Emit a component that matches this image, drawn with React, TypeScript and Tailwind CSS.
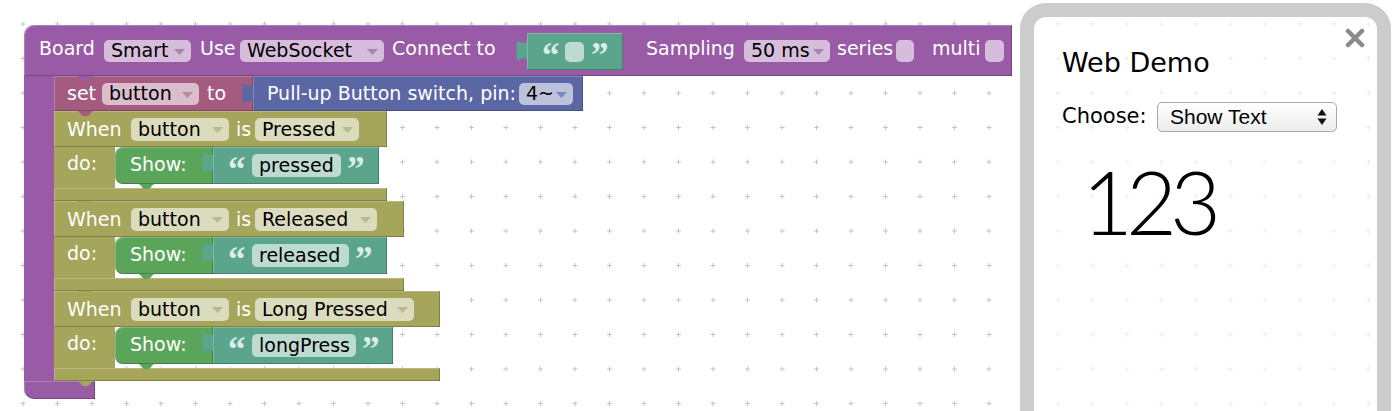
import React from "react";

// Blockly-like colours
// purple #995ba5, maroon #a55b80, blue #5b67a5, olive #a5a55b, green #5ba55b, teal #5ba58c

function Arrow({ fill }: { fill: string }) {
  return (
    <svg width="11" height="6" viewBox="0 0 11 6" className="shrink-0 mt-[2px]">
      <path d="M0 0H11L5.5 6Z" fill={fill} />
    </svg>
  );
}

function Field({
  w,
  bg,
  text,
  arrow,
  h = "h-[23px]",
}: {
  w: string;
  bg: string;
  text?: string;
  arrow?: string;
  h?: string;
}) {
  return (
    <div
      className={`${w} ${h} ${bg} shrink-0 rounded-[5px] flex items-center justify-between pl-[7px] pr-[6px] text-black whitespace-nowrap`}
    >
      <span>{text}</span>
      {arrow && <Arrow fill={arrow} />}
    </div>
  );
}

// bottom bump of a statement block
function Bump({ fill, left }: { fill: string; left: string }) {
  return (
    <svg
      width="17"
      height="5"
      viewBox="0 0 17 5"
      className={`absolute top-full ${left} z-10`}
    >
      <path d="M0 0C3 0 4 5 7 5H10C13 5 14 0 17 0Z" fill={fill} />
    </svg>
  );
}

// left puzzle tab of a value block
function Tab({ fill, top }: { fill: string; top: string }) {
  return (
    <svg
      width="11"
      height="21"
      viewBox="0 0 11 21"
      className={`absolute right-full ${top}`}
    >
      <path
        d="M11 2C9 4 6 3 3 1.5C1 0.5 0.5 2 0.5 5V16C0.5 19 1 20.5 3 19.5C6 18 9 17 11 19Z"
        fill={fill}
      />
    </svg>
  );
}

function Quote({ children }: { children: React.ReactNode }) {
  return (
    <span className="font-['Liberation_Serif',serif] font-bold text-[35px] leading-none text-[#dcede6] translate-y-[4px]">
      {children}
    </span>
  );
}

const edge =
  "shadow-[inset_0_-1px_0_rgba(0,0,0,0.22),inset_-1px_0_0_rgba(0,0,0,0.22),inset_1px_1px_0_rgba(255,255,255,0.22)]";

function ShowRow({ teal, field, text }: { teal: string; field: string; text: string }) {
  return (
    <div className="flex items-start">
      <div
        className={`relative w-[98px] h-[37px] bg-[#5ba55b] rounded-l-[8px] flex items-center pl-[15px] pb-[3px] ${edge}`}
      >
        Show:
        <Bump fill="#5ba55b" left="left-[23px]" />
      </div>
      <div className={`relative ${teal} h-[37px] bg-[#5ba58c] flex items-center pl-[15px] ${edge}`}>
        <Tab fill="#5ba58c" top="top-[5px]" />
        <span className="w-[24px] flex">
          <Quote>“</Quote>
        </span>
        <Field w={field} bg="bg-[#bddbd1]" text={text} />
        <span className="ml-[6px] flex">
          <Quote>”</Quote>
        </span>
      </div>
    </div>
  );
}

function WhenBlock({
  w,
  state,
  stateW,
  teal,
  field,
  text,
}: {
  w: string;
  state: string;
  stateW: string;
  teal: string;
  field: string;
  text: string;
}) {
  return (
    <div className={`${w} flex flex-col`}>
      <div className={`h-[36px] bg-[#a5a55b] flex items-center pl-[13px] whitespace-nowrap ${edge}`}>
        <span className="w-[64px]">When</span>
        <Field w="w-[98px]" bg="bg-[#dbdbbd]" text="button" arrow="#b9b98c" />
        <span className="w-[26px] pl-[7px]">is</span>
        <Field w={stateW} bg="bg-[#dbdbbd]" text={state} arrow="#b9b98c" />
      </div>
      <div className="h-[41px] flex items-start">
        <div className="w-[61px] self-stretch bg-[#a5a55b] pl-[13px] pt-[5px] leading-[22px]">do:</div>
        <ShowRow teal={teal} field={field} text={text} />
      </div>
      <div className={`relative h-[13px] bg-[#a5a55b] ${edge}`}>
        <Bump fill="#a5a55b" left="left-[23px]" />
      </div>
    </div>
  );
}

function Grid() {
  return (
    <svg className="absolute inset-0" width="1394" height="411">
      <defs>
        <pattern id="grid" x="5.75" y="6.75" width="34.5" height="34.5" patternUnits="userSpaceOnUse">
          <path d="M14.75 17.25h5M17.25 14.75v5" stroke="#c4c4c4" strokeWidth="1" />
        </pattern>
      </defs>
      <rect width="1394" height="411" fill="url(#grid)" />
    </svg>
  );
}

function Panel() {
  return (
    <div className="absolute left-[1020px] top-[3px] w-[371px] h-[480px] rounded-[26px] border-[14px] border-[#cccccc] bg-white/70 text-black">
      <div className="relative pl-[28px] pt-[30px]">
        <svg width="20" height="20" viewBox="0 0 20 20" className="absolute right-[12px] top-[11px]">
          <path d="M3 3L17 17M17 3L3 17" stroke="#8a8a8a" strokeWidth="4.5" strokeLinecap="round" />
        </svg>
        <div className="text-[27px] leading-[32px]">Web Demo</div>
        <div className="flex items-center mt-[23px] h-[30px]">
          <span className="w-[95px] text-[21px]">Choose:</span>
          <div className="w-[180px] h-[30px] rounded-[5px] border border-[#a8a8a8] bg-linear-to-b from-white to-[#ececec] flex items-center justify-between pl-[12px] pr-[9px] font-['Liberation_Sans',sans-serif] text-[21px]">
            <span>Show Text</span>
            <svg width="10" height="18" viewBox="0 0 10 18">
              <path d="M5 1L9.5 7.5H0.5Z M5 17L9.5 10.5H0.5Z" fill="#111" />
            </svg>
          </div>
        </div>
        <div className="pl-[20px] mt-[25px] font-['Lato',sans-serif] font-light text-[88px] leading-none tracking-[-7px]">
          123
        </div>
      </div>
    </div>
  );
}

export default function App() {
  return (
    <div className="relative w-[1394px] h-[411px] overflow-hidden bg-white font-['DejaVu_Sans',sans-serif] text-[19px] text-white">
      <Grid />

      <div className="relative flex pl-[24px] pt-[25px]">
        <div className="flex flex-col">
          {/* Board header */}
          <div
            className={`relative w-[988px] h-[51px] bg-[#995ba5] rounded-tl-[10px] flex items-center pl-[15px] whitespace-nowrap ${edge}`}
          >
            <span className="w-[65px] mb-[4px]">Board</span>
            <Field w="w-[87px]" h="h-[22px]" bg="bg-[#d6bddb]" text="Smart" arrow="#a884b2" />
            <span className="w-[49px] pl-[9px] mb-[4px]">Use</span>
            <Field w="w-[144px]" h="h-[22px]" bg="bg-[#d6bddb]" text="WebSocket" arrow="#a884b2" />
            <span className="w-[143px] pl-[8px] mb-[4px]">Connect to</span>
            <div className={`relative w-[96px] h-[37px] bg-[#5ba58c] flex items-center pl-[15px] mt-[2px] ${edge}`}>
              <Tab fill="#5ba58c" top="top-[7px]" />
              <span className="w-[23px] flex">
                <Quote>“</Quote>
              </span>
              <div className="w-[19px] h-[20px] rounded-[5px] bg-[#bddbd1]" />
              <span className="ml-[7px] flex">
                <Quote>”</Quote>
              </span>
            </div>
            <span className="w-[121px] pl-[23px] mb-[4px]">Sampling</span>
            <Field w="w-[86px]" h="h-[22px]" bg="bg-[#d6bddb]" text="50 ms" arrow="#a884b2" />
            <span className="w-[66px] pl-[7px] mb-[4px]">series</span>
            <div className="w-[18px] h-[22px] rounded-[5px] bg-[#d6bddb]" />
            <span className="w-[71px] pl-[18px] mb-[4px]">multi</span>
            <div className="w-[19px] h-[22px] rounded-[5px] bg-[#d6bddb]" />
            <Bump fill="#995ba5" left="left-[53px]" />
          </div>

          <div className="flex">
            <div className="w-[30px] bg-[#995ba5]" />
            <div className="flex flex-col">
              {/* set button to ... */}
              <div className="flex h-[35px]">
                <div className={`relative w-[199px] bg-[#a55b80] flex items-center pl-[13px] ${edge}`}>
                  <span className="w-[35px]">set</span>
                  <Field w="w-[97px]" h="h-[22px]" bg="bg-[#dbbdcc]" text="button" arrow="#b88aa1" />
                  <span className="pl-[8px]">to</span>
                  <Bump fill="#a55b80" left="left-[23px]" />
                </div>
                <div className={`relative w-[330px] bg-[#5b67a5] flex items-center pl-[14px] whitespace-nowrap ${edge}`}>
                  <Tab fill="#5b67a5" top="top-[7px]" />
                  <span className="w-[252px]">Pull-up Button switch, pin:</span>
                  <Field w="w-[54px]" h="h-[22px]" bg="bg-[#bdc2db]" text="4~" arrow="#7d86b8" />
                </div>
              </div>

              <WhenBlock
                w="w-[333px]"
                state="Pressed"
                stateW="w-[104px]"
                teal="w-[166px]"
                field="w-[89px]"
                text="pressed"
              />
              <WhenBlock
                w="w-[350px]"
                state="Released"
                stateW="w-[122px]"
                teal="w-[174px]"
                field="w-[97px]"
                text="released"
              />
              <WhenBlock
                w="w-[386px]"
                state="Long Pressed"
                stateW="w-[159px]"
                teal="w-[180px]"
                field="w-[104px]"
                text="longPress"
              />
            </div>
          </div>

          <div className={`w-[71px] h-[18px] bg-[#995ba5] rounded-bl-[10px] ${edge}`} />
        </div>
      </div>

      <Panel />
    </div>
  );
}
